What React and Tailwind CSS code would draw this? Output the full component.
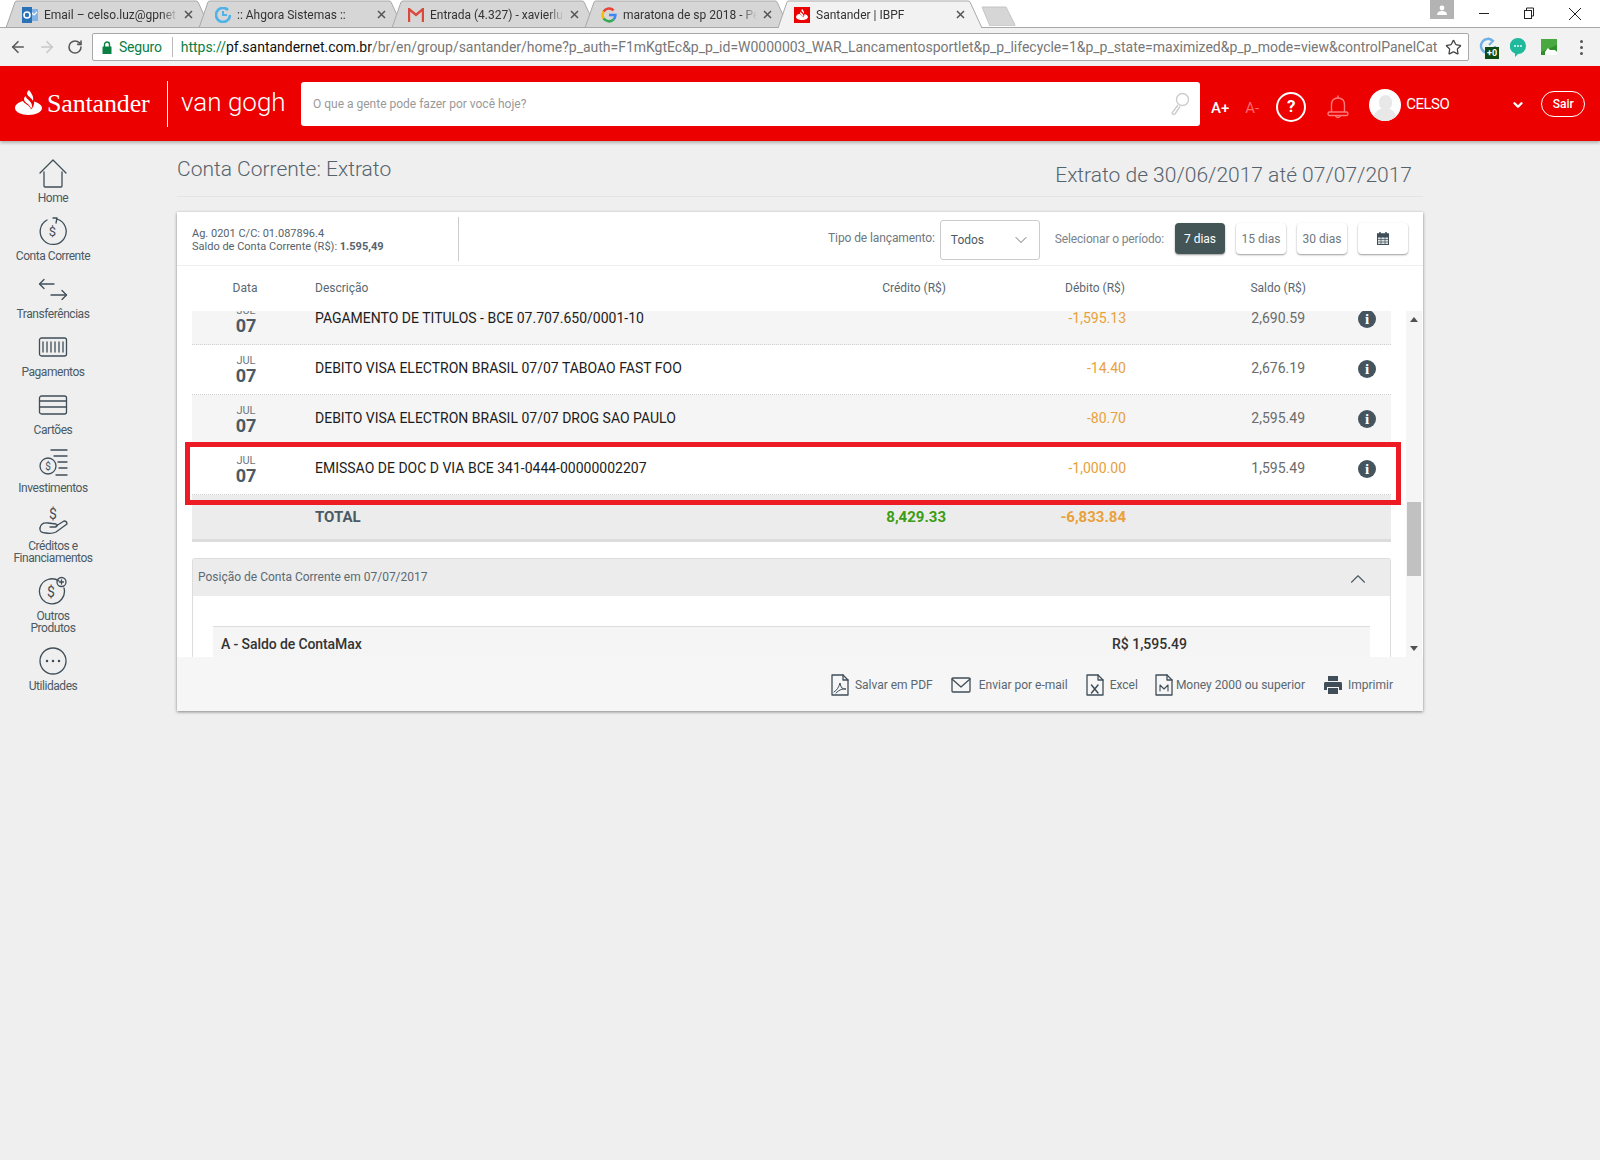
import { ChevronDown, ChevronUp, Star, ArrowLeft, ArrowRight, RotateCw } from 'lucide-react'

const navy = '#3f4e58'

const Ic = ({ w = 30, h = 30, children, className = '' }) => (
  <svg width={w} height={h} viewBox={`0 0 ${w} ${h}`} fill="none" stroke={navy} strokeWidth="1.3" strokeLinecap="round" strokeLinejoin="round" className={className}>
    {children}
  </svg>
)

const Dollar = ({ x, y, size = 13 }) => (
  <text x={x} y={y} fontSize={size} textAnchor="middle" fill={navy} stroke="none" fontFamily="Roboto, sans-serif">$</text>
)

const menu = [
  { label: ['Home'], icon: <Ic><path d="M2 15 L15 2 L28 15" /><path d="M6 14 V28 Q6 29 7 29 H23 Q24 29 24 28 V14" /></Ic> },
  { label: ['Conta Corrente'], icon: <Ic><path d="M19 3 A13 13 0 1 1 9 4" /><path d="M15 3 L19 3 L18 8" transform="translate(0 -1)" /><Dollar x={14.5} y={20} size={13} /></Ic> },
  { label: ['Transferências'], icon: <Ic h={22}><path d="M2 6 H16" /><path d="M6 1.5 L1.5 6 L6 10.5" /><path d="M13 17 H28" /><path d="M24 12.5 L28.5 17 L24 21.5" /></Ic> },
  { label: ['Pagamentos'], icon: <Ic h={22}><rect x="1.5" y="2" width="27" height="18" rx="2" /><path d="M5 6 V16 M9 6 V16 M13 6 V16 M17 6 V16 M21 6 V16 M25 6 V16" /></Ic> },
  { label: ['Cartões'], icon: <Ic h={22}><rect x="1.5" y="2" width="27" height="18" rx="2" /><path d="M1.5 7 H28.5 M1.5 13 H28.5" /></Ic> },
  { label: ['Investimentos'], icon: <Ic><circle cx="10" cy="18" r="8" /><Dollar x={10} y={22} size={10} /><path d="M13 2 H29 M16 8 H29 M20 14 H29 M21 20 H29 M18 27 H29" /></Ic> },
  { label: ['Créditos e', 'Financiamentos'], icon: <Ic><Dollar x={15} y={13} size={14} /><path d="M2 22 Q3 16 10 17 L18 18 Q21 19 18 21 L12 21" /><path d="M18 20 L26 15 Q29 15 29 18 L18 26 Q14 28 8 27 Q1 27 2 22" /></Ic> },
  { label: ['Outros', 'Produtos'], icon: <Ic><path d="M21 5 A12.5 12.5 0 1 0 26 12" /><circle cx="23.5" cy="6" r="4.5" /><path d="M23.5 4 V8 M21.5 6 H25.5" /><Dollar x={13} y={21} size={14} /></Ic> },
  { label: ['Utilidades'], icon: <Ic><circle cx="15" cy="15" r="13" /><circle cx="9" cy="15" r="0.6" fill={navy} /><circle cx="15" cy="15" r="0.6" fill={navy} /><circle cx="21" cy="15" r="0.6" fill={navy} /></Ic> },
]

const linhas = [
  { desc: 'PAGAMENTO DE TITULOS - BCE 07.707.650/0001-10', deb: '-1,595.13', saldo: '2,690.59', bg: 'bg-[#f5f5f5]' },
  { desc: 'DEBITO VISA ELECTRON BRASIL 07/07 TABOAO FAST FOO', deb: '-14.40', saldo: '2,676.19', bg: 'bg-white' },
  { desc: 'DEBITO VISA ELECTRON BRASIL 07/07 DROG SAO PAULO', deb: '-80.70', saldo: '2,595.49', bg: 'bg-[#f5f5f5]' },
  { desc: 'EMISSAO DE DOC D VIA BCE 341-0444-00000002207', deb: '-1,000.00', saldo: '1,595.49', bg: 'bg-white' },
]

const abas = [
  { title: 'Email – celso.luz@gpnet.', icon: 'outlook' },
  { title: ':: Ahgora Sistemas ::', icon: 'ahgora' },
  { title: 'Entrada (4.327) - xavierlu', icon: 'gmail' },
  { title: 'maratona de sp 2018 - Pe', icon: 'google' },
  { title: 'Santander | IBPF', icon: 'santander', active: true },
]

function Flame({ w = 27, h = 25, color = '#fff' }) {
  return (
    <svg width={w} height={h} viewBox="0 0 27 25" fill={color}>
      <path d="M14 0 C17 4 19 7 18 11 C17 8 12 6 12 3.5 C12 2 13 1 14 0 Z" />
      <path d="M10.5 6 C11 9 17 11 17 16 C17 17 16.5 18 16 18.5 C15 14 9.5 13 9 9.5 C9 8 9.7 7 10.5 6 Z" />
      <path d="M8 11 C3 12.5 0 15 0 18 C0 22 6 25 13.5 25 C21 25 27 22 27 18 C27 15 23 12.5 19 11.5 C19.5 14 18.5 17 16 19.5 C15 15 9 14 8 11 Z" />
    </svg>
  )
}

function Favicon({ tipo }) {
  if (tipo === 'outlook') return (
    <svg width="16" height="16" viewBox="0 0 16 16">
      <rect x="7" y="2" width="9" height="12" fill="#7fb2e5" />
      <path d="M9 5 L12 8 L15 5" stroke="#fff" strokeWidth="1.2" fill="none" />
      <rect x="0" y="0" width="10" height="16" fill="#2a72b8" />
      <circle cx="5" cy="8" r="3" fill="none" stroke="#fff" strokeWidth="1.6" />
    </svg>
  )
  if (tipo === 'ahgora') return (
    <svg width="16" height="16" viewBox="0 0 16 16" fill="none">
      <path d="M13 3 A7 7 0 1 0 15 8" stroke="#4fb3e8" strokeWidth="2.6" />
      <path d="M8 4 V8 H12" stroke="#4fb3e8" strokeWidth="2" />
    </svg>
  )
  if (tipo === 'gmail') return (
    <svg width="16" height="14" viewBox="0 0 16 14" fill="none">
      <path d="M1 14 V1 L8 7 L15 1 V14" stroke="#d9493c" strokeWidth="2.4" />
    </svg>
  )
  if (tipo === 'google') return (
    <svg width="16" height="16" viewBox="0 0 16 16" fill="none" strokeWidth="2.6">
      <path d="M12.6 3.4 A6.4 6.4 0 0 0 2.6 4.6" stroke="#ea4335" />
      <path d="M2.6 4.6 A6.4 6.4 0 0 0 2.6 11.4" stroke="#fbbc05" />
      <path d="M2.6 11.4 A6.4 6.4 0 0 0 12.6 12.4" stroke="#34a853" />
      <path d="M12.6 12.4 A6.4 6.4 0 0 0 14.4 8 H8" stroke="#4285f4" />
    </svg>
  )
  return (
    <div className="w-4 h-4 bg-[#ec0000] flex items-center justify-center">
      <Flame w={12} h={11} />
    </div>
  )
}

function Aba({ title, icon, active }) {
  return (
    <div className={`relative w-[204px] h-[28px] shrink-0 -mr-[11px] ${active ? 'z-10' : ''}`}>
      <svg width="204" height="28" viewBox="0 0 204 28" className="absolute inset-0">
        <path d="M0 28 L9 2 Q9.5 1 11 1 H190 Q191.5 1 192 2 L204 28" fill={active ? '#f2f2f2' : '#d6d6d6'} stroke="#a8a8a8" />
      </svg>
      <div className="relative flex items-center h-full pl-[16px] pr-[14px] pt-[1px]">
        <div className="w-[16px] flex justify-center shrink-0"><Favicon tipo={icon} /></div>
        <span className="ml-[6px] flex-1 text-[12px] text-[#333] whitespace-nowrap overflow-hidden [mask-image:linear-gradient(to_right,black_88%,transparent)]">{title}</span>
        <span className="w-[16px] ml-[2px] flex justify-center shrink-0">
          <svg width="9" height="9" viewBox="0 0 9 9" stroke="#555" strokeWidth="1.5"><path d="M1 1 L8 8 M8 1 L1 8" /></svg>
        </span>
      </div>
    </div>
  )
}

function Chrome() {
  return (
    <div>
      <div className="h-[28px] bg-white flex pl-[6px] relative">
        {abas.map(a => <Aba key={a.title} {...a} />)}
        <svg width="36" height="20" viewBox="0 0 36 20" className="ml-[11px] mt-[6px] -translate-x-[1px]">
          <path d="M1 1 H25 L34 19 Q34 20 33 20 H9 Z" fill="#d6d6d6" stroke="#c4c4c4" />
        </svg>
        <div className="flex-1" />
        <div className="w-[24px] h-[19px] bg-[#b3b3b3] flex justify-center items-center mr-[24px]">
          <svg width="10" height="10" viewBox="0 0 10 10" fill="#fff"><circle cx="5" cy="3" r="2.4" /><path d="M0 10 Q0 6 5 6 Q10 6 10 10 Z" /></svg>
        </div>
        <div className="flex items-start pt-[7px] pr-[18px] gap-[33px]">
          <svg width="12" height="12" viewBox="0 0 12 12" stroke="#222"><path d="M1 6.5 H11" /></svg>
          <svg width="12" height="12" viewBox="0 0 12 12" fill="none" stroke="#222"><rect x="1.5" y="3.5" width="7" height="8" /><path d="M3.5 3 V1 H10.5 V9 H9" /></svg>
          <svg width="14" height="14" viewBox="0 0 14 14" stroke="#222"><path d="M1 1 L13 13 M13 1 L1 13" /></svg>
        </div>
      </div>
      <div className="h-[39px] bg-[#f2f2f2] flex items-center border-t border-[#a8a8a8] -mt-[1px] relative">
        <ArrowLeft size={18} strokeWidth={2.2} className="ml-[9px] text-[#5a5a5a]" />
        <ArrowRight size={18} strokeWidth={2.2} className="ml-[11px] text-[#c8c8c8]" />
        <RotateCw size={16} strokeWidth={2.4} className="ml-[11px] text-[#5a5a5a]" />
        <div className="ml-[9px] w-[1377px] h-[28px] bg-white border border-[#a9a9a9] rounded-[2px] flex items-center overflow-hidden">
          <svg width="10" height="13" viewBox="0 0 10 13" className="ml-[9px] shrink-0" fill="#0b8043">
            <path d="M2.5 6 V3.5 A2.5 2.5 0 0 1 7.5 3.5 V6" fill="none" stroke="#0b8043" strokeWidth="1.4" />
            <rect x="0.5" y="5.5" width="9" height="7.5" rx="0.5" />
          </svg>
          <span className="ml-[7px] text-[14px] text-[#0b8043] tracking-[-0.2px]">Seguro</span>
          <span className="ml-[10px] w-px h-[20px] bg-[#bbb]" />
          <span className="ml-[8px] text-[14px] text-[#777] whitespace-nowrap w-[1258px] overflow-hidden tracking-[-0.015px]">
            <span className="text-[#0b8043]">https://</span><span className="text-[#111]">pf.santandernet.com.br</span>/br/en/group/santander/home?p_auth=F1mKgtEc&amp;p_p_id=W0000003_WAR_Lancamentosportlet&amp;p_p_lifecycle=1&amp;p_p_state=maximized&amp;p_p_mode=view&amp;controlPanelCat
          </span>
          <Star size={17} strokeWidth={1.8} className="ml-[6px] text-[#444] shrink-0" />
        </div>
        <div className="relative ml-[10px] w-[20px] h-[20px]">
          <svg width="18" height="18" viewBox="0 0 18 18" fill="none" stroke="#6fb1e6" strokeWidth="2.4"><path d="M14 4 A7 7 0 1 0 16 9" /><path d="M9 1 L14 4 L10 8" strokeWidth="2" /></svg>
          <span className="absolute left-[6px] top-[10px] bg-[#0f4a10] text-white text-[9px] leading-[12px] px-[2px] font-bold">+0</span>
        </div>
        <svg width="16" height="19" viewBox="0 0 16 19" className="ml-[11px]">
          <path d="M8 0 A8 8 0 0 1 8 16 L5 19 V15.5 A8 8 0 0 1 8 0 Z" fill="#1fb99c" />
          <circle cx="5" cy="8" r="0.9" fill="#fff" /><circle cx="8" cy="8" r="0.9" fill="#fff" /><circle cx="11" cy="8" r="0.9" fill="#fff" />
        </svg>
        <svg width="16" height="16" viewBox="0 0 16 16" className="ml-[15px]">
          <rect width="16" height="16" fill="#2f8f2a" />
          <path d="M0 0 H16 V6 L0 13 Z" fill="#49a83f" />
          <path d="M4 16 L4 13 L7 9 L9 11 H14 L16 13 V16 Z" fill="#fff" />
        </svg>
        <div className="ml-[23px] flex flex-col gap-[3px]">
          <i className="w-[3px] h-[3px] bg-[#555] rounded-full" />
          <i className="w-[3px] h-[3px] bg-[#555] rounded-full" />
          <i className="w-[3px] h-[3px] bg-[#555] rounded-full" />
        </div>
      </div>
    </div>
  )
}

function Topo() {
  return (
    <div className="h-[75px] bg-[#ec0000] flex items-center shadow-[0_2px_3px_rgba(0,0,0,0.25)] relative z-10">
      <div className="ml-[15px] -mt-[2px]"><Flame /></div>
      <span className="ml-[5px] w-[105px] text-[26px] leading-none text-white font-[family-name:'Liberation_Serif',serif] tracking-[-0.15px]">Santander</span>
      <span className="ml-[15px] w-px h-[46px] bg-white" />
      <span className="ml-[13px] w-[120px] text-[26px] leading-none text-white font-light -mt-[3px]">van gogh</span>
      <div className="w-[899px] h-[44px] bg-white rounded-[3px] flex items-center">
        <span className="ml-[12px] flex-1 text-[12px] text-[#999]">O que a gente pode fazer por você hoje?</span>
        <svg width="20" height="24" viewBox="0 0 20 24" fill="none" stroke="#ccc" strokeWidth="1.4" className="mr-[10px]">
          <circle cx="12.5" cy="7.5" r="6" />
          <path d="M8 13 L2 21 Q3.5 23.5 5 22 L10 14.5" />
        </svg>
      </div>
      <span className="ml-[11px] text-[15px] font-medium text-white mt-[10px]">A+</span>
      <span className="ml-[16px] text-[15px] text-[#ff6b6b] mt-[10px]">A-</span>
      <span className="ml-[17px] mt-[6px] w-[30px] h-[30px] rounded-full border-2 border-white text-white font-bold text-[17px] flex items-center justify-center">?</span>
      <svg width="22" height="26" viewBox="0 0 22 26" fill="none" stroke="#ff7a7a" strokeWidth="1.4" className="ml-[21px] mt-[6px]">
        <path d="M11 1.5 V4" />
        <path d="M4.5 18 V11 Q4.5 4 11 4 Q17.5 4 17.5 11 V18" />
        <rect x="1" y="18" width="20" height="3.5" rx="1.7" />
        <path d="M8.5 22 Q11 25 13.5 22" />
      </svg>
      <div className="ml-[20px] mt-[2px] w-[32px] h-[32px] rounded-full bg-white overflow-hidden flex flex-col items-center">
        <div className="mt-[6px] w-[13px] h-[18px] rounded-full bg-[#e8e8e8]" />
        <div className="-mt-[2px] w-[24px] h-[14px] rounded-t-full bg-[#e8e8e8]" />
      </div>
      <span className="ml-[5px] text-[15px] text-white w-[42px] tracking-[-0.5px] mt-[2px]">CELSO</span>
      <ChevronDown size={14} strokeWidth={4} className="ml-[63px] text-white mt-[2px]" />
      <span className="ml-[16px] w-[44px] h-[26px] rounded-full border border-white text-white text-[12px] font-medium flex items-center justify-center">Sair</span>
    </div>
  )
}

function Lateral() {
  return (
    <div className="w-[106px] shrink-0 pt-[17px] flex flex-col items-center">
      {menu.map(m => (
        <div key={m.label[0]} className="flex flex-col items-center mb-[12px]">
          <div className="h-[30px] flex items-center">{m.icon}</div>
          <div className="mt-[4px] text-center text-[12px] leading-[12px] text-[#4b5a63] tracking-[-0.45px] whitespace-nowrap">
            {m.label.map(l => <div key={l}>{l}</div>)}
          </div>
        </div>
      ))}
    </div>
  )
}

const colunas = 'grid grid-cols-[123px_451px_180px_180px_179px_86px]'

function Linha({ desc, deb, saldo, bg }) {
  return (
    <div className={`${colunas} h-[50px] ${bg} border-b border-dotted border-[#cfcfcf]`}>
      <div className="pr-[15px] pt-[10px] text-center">
        <div className="text-[11px] leading-[12px] text-[#6a7780]">JUL</div>
        <div className="text-[18px] leading-[18px] font-bold text-[#4b5a63]">07</div>
      </div>
      <div className="pt-[15px] text-[14px] leading-[17px] text-[#1c1c1c] whitespace-nowrap">{desc}</div>
      <div />
      <div className="pt-[15px] text-right text-[14px] leading-[17px] text-[#e8a13c]">{deb}</div>
      <div className="pt-[15px] text-right text-[14px] leading-[17px] text-[#6b6b6b]">{saldo}</div>
      <div className="pt-[15px] pl-[53px]">
        <span className="w-[18px] h-[18px] rounded-full bg-[#44555f] flex items-center justify-center text-white text-[15px] font-bold font-[family-name:'Liberation_Serif',serif] leading-none">i</span>
      </div>
    </div>
  )
}

function Seta({ cima }) {
  return (
    <div className="h-[17px] flex items-center justify-center">
      <svg width="8" height="5" viewBox="0 0 8 5" fill="#505050">
        <path d={cima ? 'M4 0 L8 5 H0 Z' : 'M4 5 L8 0 H0 Z'} />
      </svg>
    </div>
  )
}

const acoes = [
  { label: 'Salvar em PDF', ml: '', icon: <Ic w={18} h={22}><path d="M1 1 H12 L17 6 V21 H1 Z" /><path d="M12 1 V6 H17" /><path d="M3 18 Q7 16 9 9 Q10 16 15 15 Q10 14 5 19" strokeWidth="1" /></Ic> },
  { label: 'Enviar por e-mail', ml: 'ml-[18px]', gap: 'ml-[8px]', icon: <Ic w={20} h={16}><rect x="1" y="1" width="18" height="14" rx="1" /><path d="M1 2 L10 10 L19 2" /></Ic> },
  { label: 'Excel', ml: 'ml-[18px]', icon: <Ic w={18} h={22}><path d="M1 1 H12 L17 6 V21 H1 Z" /><path d="M12 1 V6 H17" /><path d="M5.5 11 L12 19 M12 11 L5.5 19" strokeWidth="1.5" /></Ic> },
  { label: 'Money 2000 ou superior', ml: 'ml-[17px]', gap: 'ml-[3px]', icon: <Ic w={18} h={22}><path d="M1 1 H12 L17 6 V21 H1 Z" /><path d="M12 1 V6 H17" /><path d="M5 17 V11 L9 15 L13 11 V17" strokeWidth="1.1" /></Ic> },
  { label: 'Imprimir', ml: 'ml-[19px]', icon: <svg width="18" height="18" viewBox="0 0 18 18" fill={navy}><path d="M4 0 H14 V5 H4 Z" /><path d="M1 6 H17 Q18 6 18 8 V14 H15 V11 H3 V14 H0 V8 Q0 6 1 6 Z" /><path d="M4 12 H14 V18 H4 Z" /></svg> },
]

function Cartao() {
  return (
    <div className="mt-[15px] w-[1246px] bg-white shadow-[0_1px_3px_rgba(0,0,0,0.45)]">
      <div className="h-[54px] border-b border-[#eee] flex items-center">
        <div className="w-[282px] h-[44px] border-r border-[#ccc] pl-[15px] pt-[10px] text-[11px] leading-[13px] text-[#56636c]">
          <div>Ag. 0201 C/C: 01.087896.4</div>
          <div>Saldo de Conta Corrente (R$): <b className="font-bold">1.595,49</b></div>
        </div>
        <div className="flex-1 flex items-center justify-end pr-[15px]">
          <span className="text-[12px] text-[#6d7880] -mt-[2px] tracking-[-0.1px]">Tipo de lançamento:</span>
          <div className="ml-[5px] mt-[2px] w-[100px] h-[40px] border border-[#ccc] rounded-[3px] flex items-center justify-between pl-[10px] pr-[8px]">
            <span className="text-[12px] text-[#4b5a63]">Todos</span>
            <ChevronDown size={20} strokeWidth={1} className="text-[#4b5a63]" />
          </div>
          <span className="ml-[15px] text-[12px] text-[#7b858c] tracking-[-0.15px]">Selecionar o período:</span>
          <span className="ml-[11px] w-[50px] h-[31px] rounded-[4px] bg-[#445557] text-white text-[12px] flex items-center justify-center shadow-[0_1px_2px_rgba(0,0,0,0.4)]">7 dias</span>
          <span className="ml-[11px] w-[50px] h-[31px] rounded-[4px] bg-white text-[#6d7880] text-[12px] flex items-center justify-center shadow-[0_1px_2px_rgba(0,0,0,0.4)]">15 dias</span>
          <span className="ml-[11px] w-[50px] h-[31px] rounded-[4px] bg-white text-[#6d7880] text-[12px] flex items-center justify-center shadow-[0_1px_2px_rgba(0,0,0,0.4)]">30 dias</span>
          <span className="ml-[11px] w-[50px] h-[31px] rounded-[4px] bg-white flex items-center justify-center shadow-[0_1px_2px_rgba(0,0,0,0.4)]">
            <svg width="12" height="13" viewBox="0 0 12 13" fill="none" stroke="#3f4e58">
              <rect x="0.5" y="2" width="11" height="10.5" fill="#dfe3e5" />
              <rect x="0.5" y="2" width="11" height="3" fill="#3f4e58" />
              <path d="M3 0 V3 M9 0 V3" strokeWidth="1.5" />
              <path d="M0.5 7.5 H11.5 M0.5 10 H11.5 M4 5 V12.5 M8 5 V12.5" strokeWidth="0.7" />
            </svg>
          </span>
        </div>
      </div>

      <div className={`${colunas} h-[45px] pl-[15px] pb-[2px] w-[1214px] text-[12px] text-[#5a6770] items-center`}>
        <div className="pr-[17px] text-center">Data</div>
        <div>Descrição</div>
        <div className="text-right">Crédito (R$)</div>
        <div className="text-right pr-[1px]">Débito (R$)</div>
        <div className="text-right -mr-[1px]">Saldo (R$)</div>
        <div />
      </div>

      <div className="relative h-[346px] flex overflow-hidden">
        <div className="ml-[15px] w-[1199px] -mt-[16px] shrink-0">
          {linhas.map(l => <Linha key={l.desc} {...l} />)}
          <div className={`${colunas} h-[47px] bg-[#ececec] border-b-[3px] border-[#dcdcdc] text-[15px] leading-[17px] font-bold`}>
            <div />
            <div className="pt-[14px] text-[#4b5a63]">TOTAL</div>
            <div className="pt-[14px] text-right text-[#3a9d12]">8,429.33</div>
            <div className="pt-[14px] text-right text-[#e8a13c]">-6,833.84</div>
          </div>
          <div className="mt-[16px] w-[1199px] border border-b-0 border-[#ddd] rounded-t-[3px] h-[140px]">
            <div className="h-[37px] bg-[#ececec] flex items-center justify-between pl-[5px] pr-[19px]">
              <span className="text-[12px] text-[#5a6a75] -mt-[2px]">Posição de Conta Corrente em 07/07/2017</span>
              <ChevronUp size={26} strokeWidth={1} className="text-[#4b5a63] mt-[2px]" />
            </div>
            <div className="mt-[30px] mx-[20px] bg-[#f5f5f5] border-t border-[#ddd] h-[50px] flex pl-[8px] pt-[9px] text-[14px] leading-[17px] text-[#333] font-medium">
              <span className="w-[891px] tracking-[-0.1px]">A - Saldo de ContaMax</span>
              <span>R$ 1,595.49</span>
            </div>
          </div>
        </div>
        <div className="ml-[15px] w-[16px] bg-[#f5f5f5] flex flex-col">
          <Seta cima />
          <div className="mt-[174px] mx-[1px] h-[74px] bg-[#c1c1c1]" />
          <div className="flex-1" />
          <Seta />
        </div>
        <div className="absolute left-[8px] top-[131px] w-[1216px] h-[63px] border-[5px] border-[#ed1c24] pointer-events-none" />
      </div>

      <div className="h-[54px] bg-[#f6f6f6] flex items-center justify-end pr-[30px] pt-[2px]">
        {acoes.map(a => (
          <div key={a.label} className={`flex items-center ${a.ml}`}>
            {a.icon}
            <span className={`${a.gap || 'ml-[6px]'} text-[12px] text-[#5a6770]`}>{a.label}</span>
          </div>
        ))}
      </div>
    </div>
  )
}

export default function App() {
  return (
    <div className="min-h-[1160px] bg-[#efefef] font-[family-name:Roboto,sans-serif]">
      <Chrome />
      <Topo />
      <div className="flex">
        <Lateral />
        <div className="ml-[71px] w-[1246px]">
          <div className="h-[56px] border-b border-[#e4e4e4] flex justify-between pr-[11px]">
            <h1 className="text-[21px] leading-[24px] mt-[16px] font-light text-[#56636c]">Conta Corrente: Extrato</h1>
            <h2 className="text-[21px] leading-[24px] mt-[22px] font-light text-[#56636c]">Extrato de 30/06/2017 até 07/07/2017</h2>
          </div>
          <Cartao />
        </div>
      </div>
    </div>
  )
}
